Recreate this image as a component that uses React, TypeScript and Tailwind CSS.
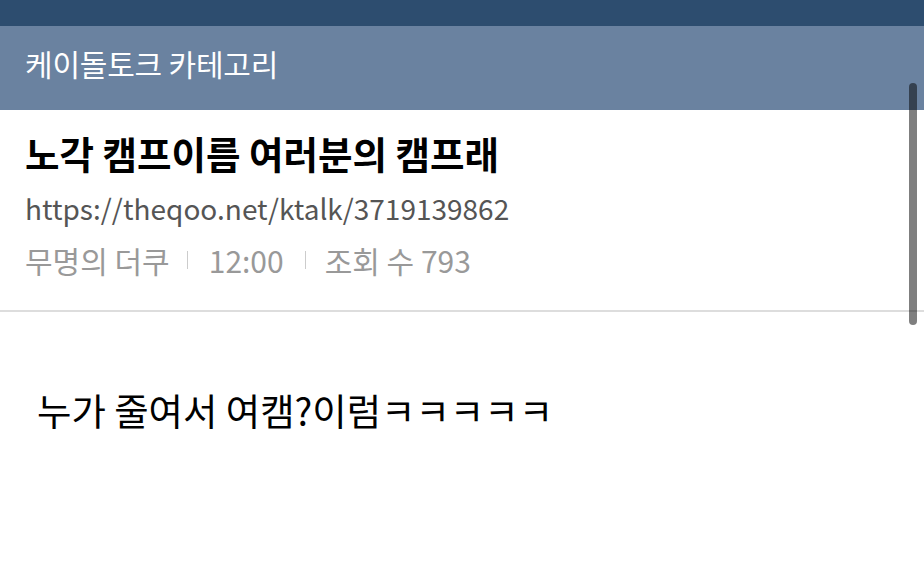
export default function App() {
  const font = { fontFamily: '"Noto Sans CJK KR", "Noto Sans", sans-serif' };

  return (
    <div className="relative w-[924px] h-[563px] bg-white overflow-hidden" style={font}>
      {/* Status strip */}
      <div className="h-[26px] bg-[#2d4d6f]" />

      {/* Category header */}
      <div className="h-[84px] bg-[#6a82a0] flex items-center px-[25px] pb-[11px]">
        <h1 className="text-[30px] text-white tracking-[-0.2px] leading-none">케이돌토크 카테고리</h1>
      </div>

      {/* Post meta */}
      <div className="px-[25px] pt-[21px] pb-[30px] border-b-2 border-[#dddddd]">
        <h2 className="text-[37.5px] font-bold text-black leading-[44px]">
          노각 캠프이름 여러분의 캠프래
        </h2>
        <p className="mt-[15px] text-[28px] text-[#555555] leading-[36px]">
          https://theqoo.net/ktalk/3719139862
        </p>
        <div className="mt-[14px] flex items-center text-[30px] text-[#999999] leading-[40px]">
          <span>무명의 더쿠</span>
          <span className="ml-[17px] mr-[21px] w-px h-[18px] bg-[#cccccc]" />
          <span>12:00</span>
          <span className="ml-[21px] mr-[19px] w-px h-[18px] bg-[#cccccc]" />
          <span>조회 수 793</span>
        </div>
      </div>

      {/* Body */}
      <div className="px-[37px] pt-[75px]">
        <p className="text-[37.4px] text-black leading-[46px]">누가 줄여서 여캠?이럼ㅋㅋㅋㅋㅋ</p>
      </div>

      {/* Scrollbar overlay */}
      <div className="absolute left-[909px] top-[83px] w-[8px] h-[242px] rounded-full bg-black/50" />
    </div>
  );
}
